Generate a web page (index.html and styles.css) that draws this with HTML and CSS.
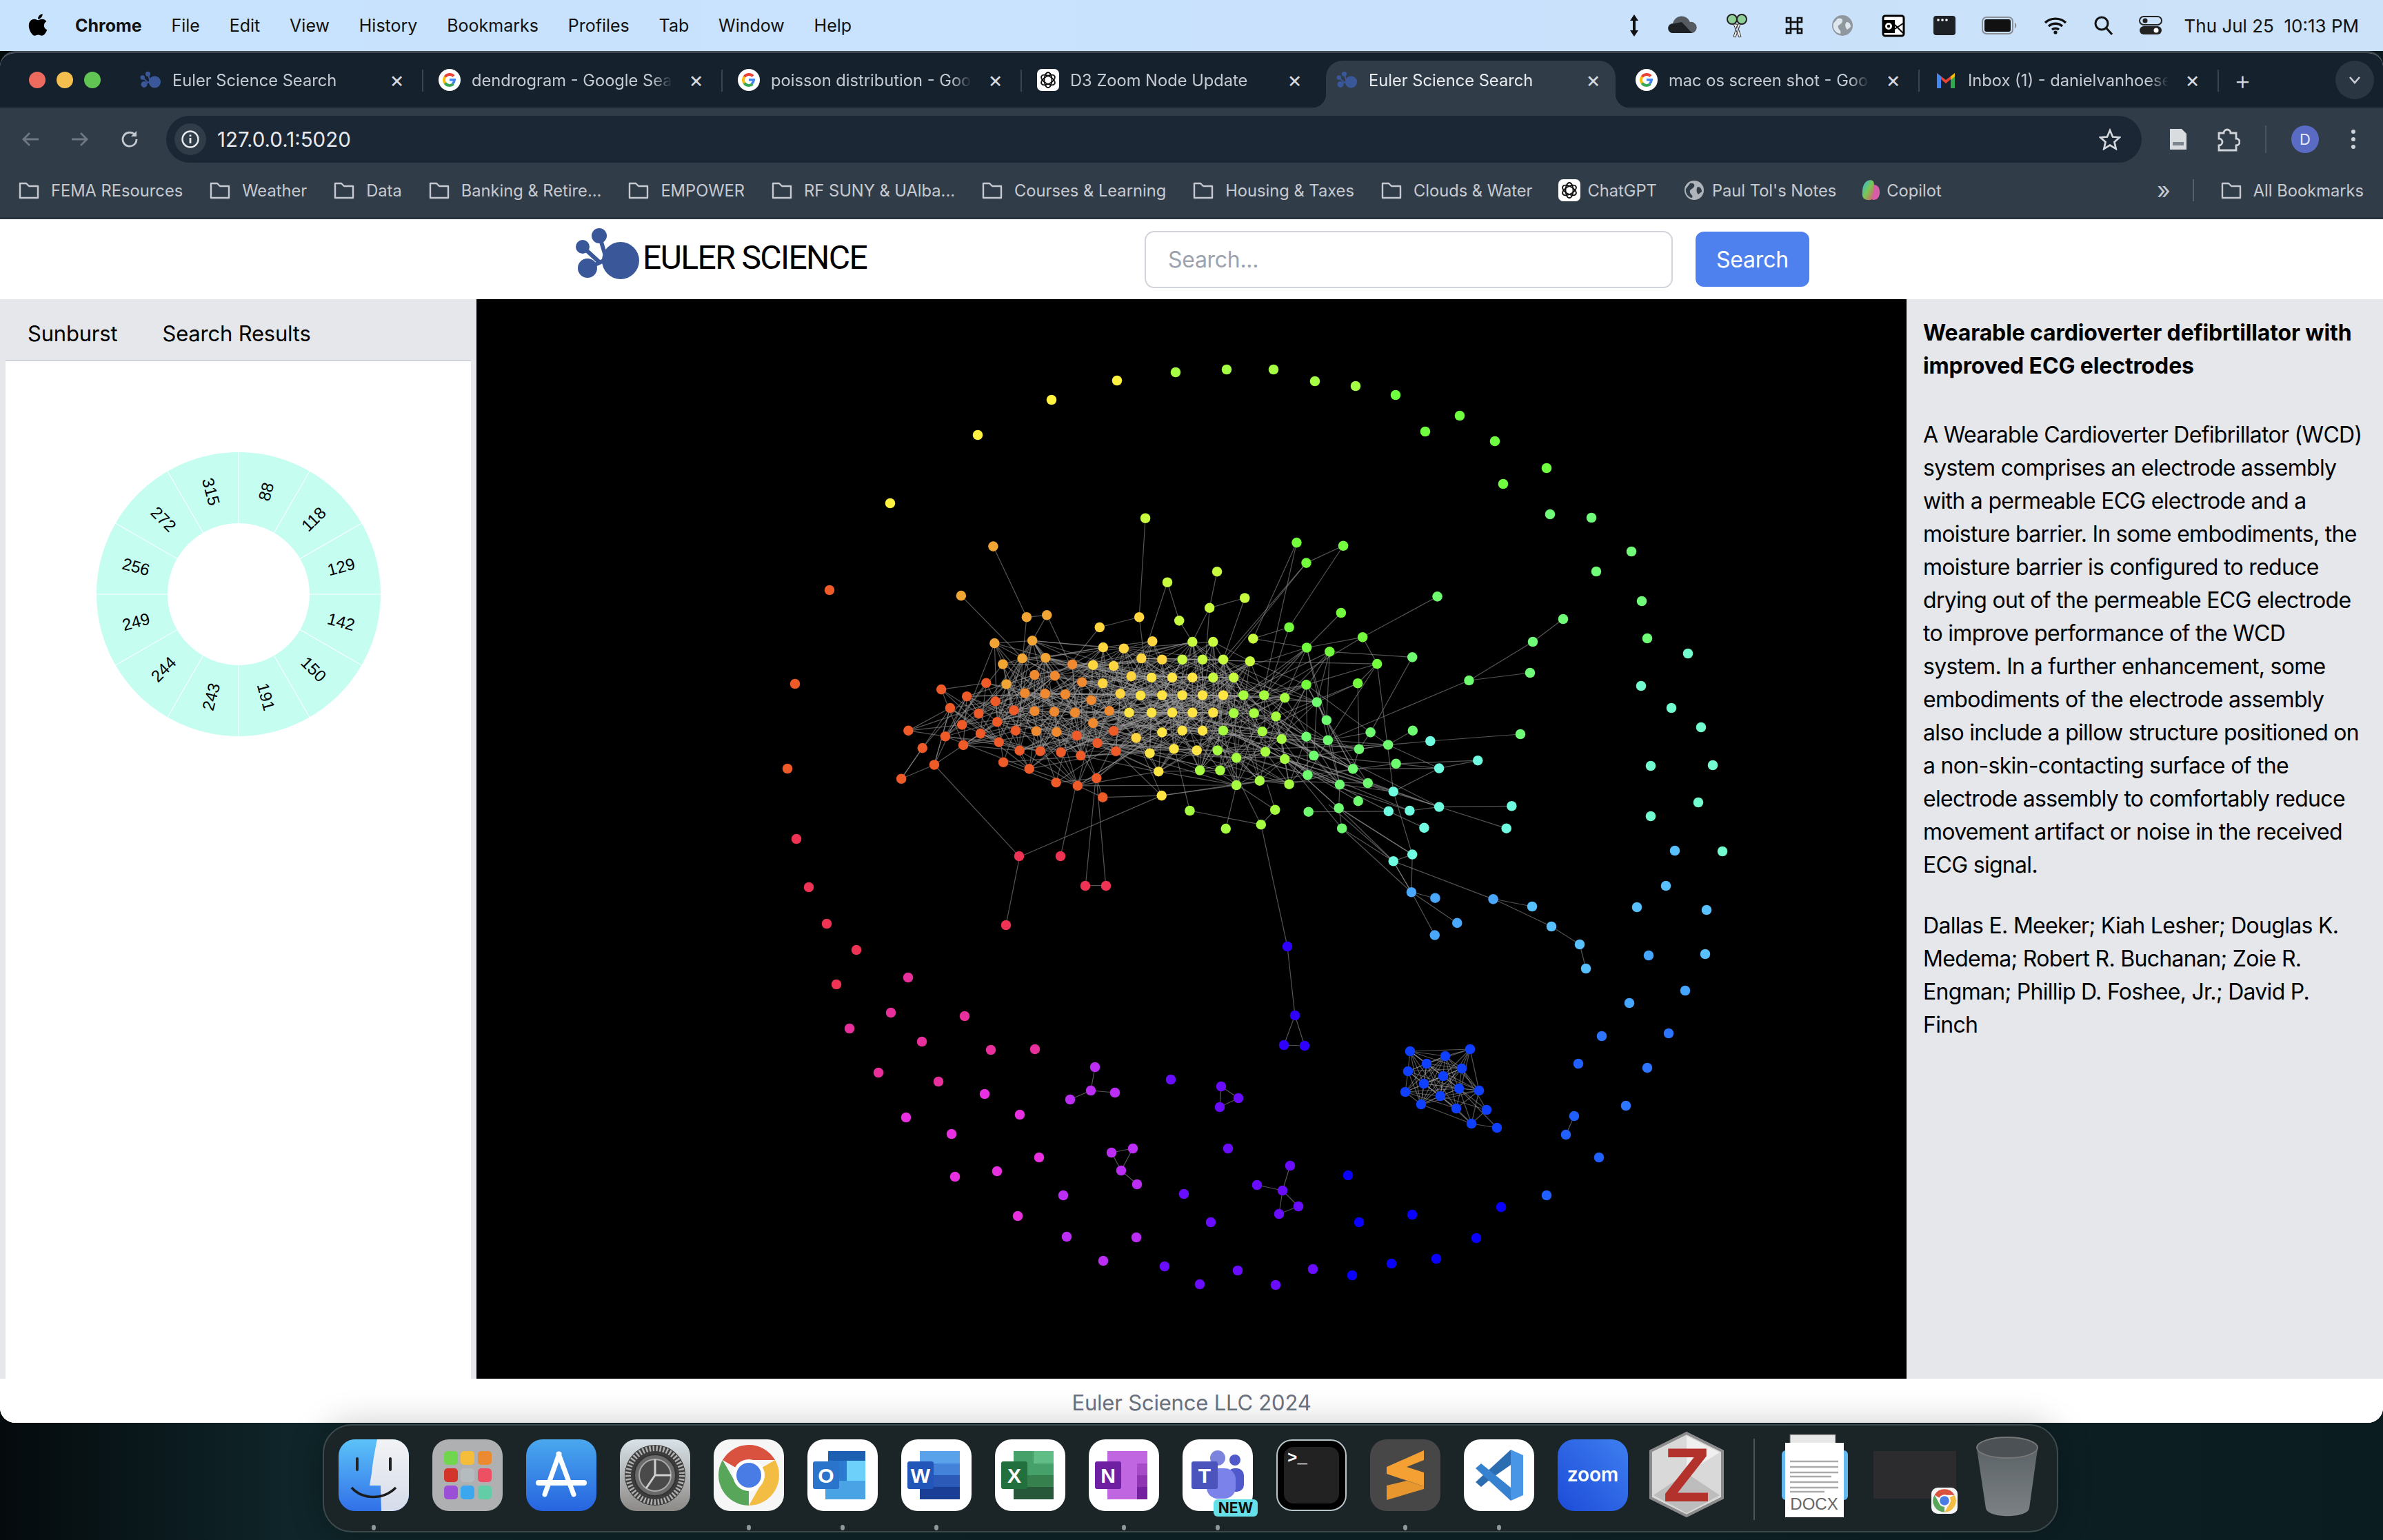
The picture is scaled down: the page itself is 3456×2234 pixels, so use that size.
FILE: index.html
```html
<!DOCTYPE html>
<html lang="en">
<head>
<meta charset="utf-8">
<title>Euler Science Search</title>
<link rel="stylesheet" href="styles.css">
</head>
<body>
<svg class="defs" aria-hidden="true">
  <defs>
    <clipPath id="sq"><rect width="102" height="104" rx="24"/></clipPath>
    <linearGradient id="gFinder" x1="0" y1="0" x2="0" y2="1"><stop offset="0" stop-color="#5cc3f9"/><stop offset="1" stop-color="#3170e8"/></linearGradient>
    <linearGradient id="gFinderR" x1="0" y1="0" x2="0" y2="1"><stop offset="0" stop-color="#f2f3f5"/><stop offset="1" stop-color="#d5dcea"/></linearGradient>
    <linearGradient id="gStore" x1="0" y1="0" x2="0" y2="1"><stop offset="0" stop-color="#4aa8ee"/><stop offset="1" stop-color="#2664df"/></linearGradient>
    <linearGradient id="gSet" x1="0" y1="0" x2="0" y2="1"><stop offset="0" stop-color="#d8e2e8"/><stop offset="1" stop-color="#8d8a87"/></linearGradient>
    <linearGradient id="gZoom" x1="1" y1="0" x2="0" y2="1"><stop offset="0" stop-color="#3e7ff0"/><stop offset="1" stop-color="#1d4bd8"/></linearGradient>
    <linearGradient id="gTrash" x1="0" y1="0" x2="0" y2="1"><stop offset="0" stop-color="#585f62"/><stop offset="1" stop-color="#7b8184"/></linearGradient>
    <linearGradient id="gCopilot" x1="0" y1="0" x2="1" y2="1"><stop offset="0" stop-color="#2fb6e8"/><stop offset=".5" stop-color="#7ac74f"/><stop offset="1" stop-color="#e8507a"/></linearGradient>
    <symbol id="i-euler" viewBox="0 0 100 76">
      <path class="euler-link" d="M39 10 L48 40 M15 27 L40 50 M22 58 L50 45"/>
      <circle class="euler-dot" cx="39" cy="11" r="11"/><circle class="euler-dot" cx="15" cy="27" r="10"/>
      <circle class="euler-dot" cx="22" cy="58" r="14"/><circle class="euler-dot" cx="70" cy="47" r="27"/>
    </symbol>
    <symbol id="i-g" viewBox="0 0 32 32">
      <circle cx="16" cy="16" r="16" fill="#fff"/>
      <path d="M9.5 11.5A8 8 0 0 1 22 10.5" fill="none" stroke="#ea4335" stroke-width="4"/>
      <path d="M9.5 11.5A8 8 0 0 0 9.5 20.5" fill="none" stroke="#fbbc05" stroke-width="4"/>
      <path d="M9.5 20.5A8 8 0 0 0 21.5 21.8" fill="none" stroke="#34a853" stroke-width="4"/>
      <path d="M16 14h9v2a9 9 0 0 1-3.500 6.500l-2.500-2.500a5 5 0 0 0 2-2.500H16z" fill="#4285f4"/>
    </symbol>
    <symbol id="i-gpt" viewBox="0 0 32 32">
      <rect width="32" height="32" rx="7" fill="#fff"/>
      <g fill="none" stroke="#111" stroke-width="1.800">
        <ellipse cx="16" cy="16" rx="5.500" ry="11"/><ellipse cx="16" cy="16" rx="5.500" ry="11" transform="rotate(60 16 16)"/><ellipse cx="16" cy="16" rx="5.500" ry="11" transform="rotate(120 16 16)"/>
      </g>
    </symbol>
    <symbol id="i-folder" viewBox="0 0 32 32">
      <path d="M3 6h9l4 4h13v17H3z" fill="none" stroke="currentColor" stroke-width="2.400" stroke-linejoin="round"/>
    </symbol>
    <symbol id="i-chrome" viewBox="0 0 100 100">
      <path d="M50 6a44 44 0 0 1 38.100 22H50a22 22 0 0 0-19 11L12 28A44 44 0 0 1 50 6z" fill="#d8523f"/>
      <path d="M50 6a44 44 0 0 1 38.100 22H50a22 22 0 0 0-19 11L12 28A44 44 0 0 1 50 6z" fill="#f2bd42" transform="rotate(120 50 50)"/>
      <path d="M50 6a44 44 0 0 1 38.100 22H50a22 22 0 0 0-19 11L12 28A44 44 0 0 1 50 6z" fill="#57a65a" transform="rotate(240 50 50)"/>
      <circle cx="50" cy="50" r="23" fill="#fff"/><circle cx="50" cy="50" r="18" fill="#4a7ce6"/>
    </symbol>
  </defs>
</svg>

<header class="menubar">
  <svg class="apple" viewBox="0 0 384 512"><path d="M318.700 268.700c-.2-36.700 16.400-64.400 50-84.800-18.800-26.900-47.200-41.700-84.700-44.600-35.500-2.800-74.300 20.700-88.500 20.700-15 0-49.400-19.700-76.400-19.700C63.300 141.200 4 184.800 4 273.500q0 39.300 14.400 81.200c12.800 36.700 59 126.700 107.200 125.200 25.200-.6 43-17.900 75.800-17.900 31.800 0 48.300 17.900 76.400 17.900 48.600-.7 90.400-82.500 102.600-119.300-65.200-30.700-61.700-90-61.700-91.900zm-56.600-164.200c27.300-32.400 24.800-61.900 24-72.500-24.100 1.400-52 16.400-67.900 34.900-17.500 19.800-27.800 44.300-25.600 71.900 26.100 2 49.900-11.400 69.500-34.300z"/></svg>
  <nav class="menus">
    <b>Chrome</b><span>File</span><span>Edit</span><span>View</span><span>History</span><span>Bookmarks</span><span>Profiles</span><span>Tab</span><span>Window</span><span>Help</span>
  </nav>
  <div class="status">
    <svg class="st" width="16" height="32" viewBox="0 0 16 32"><path d="M8 0l6 9h-4v14h4l-6 9-6-9h4V9H2z" fill="#111"/></svg>
    <svg class="st" width="42" height="32" viewBox="0 0 42 32"><path d="M7 27a7 7 0 0 1 0-14 13 13 0 0 1 25-2 8 8 0 0 1 3 16z" fill="#555b60"/><path d="M7 27a7 7 0 0 1-3-13l16-3 15 16z" fill="#1d2126"/></svg>
    <svg class="st" width="34" height="36" viewBox="0 0 34 36"><circle cx="10" cy="9" r="7" fill="#8fcf98" stroke="#222" stroke-width="2"/><circle cx="24" cy="9" r="7" fill="#8fcf98" stroke="#222" stroke-width="2"/><path d="M12 16l8 19 3-1-6-18zM22 16l-7 19-3-1 6-18z" fill="#eee" stroke="#333"/></svg>
    <svg class="st st-cmd" width="26" height="30" viewBox="0 0 26 30"><path d="M8 4v22M18 4v22M2 10h22M2 20h22M2 4h6v6H2zM18 4h6v6h-6zM2 20h6v6H2zM18 20h6v6h-6z" fill="none" stroke="#111" stroke-width="2.600"/></svg>
    <svg class="st" width="32" height="32" viewBox="0 0 32 32"><circle cx="16" cy="16" r="15" fill="#8f979f"/><path d="M9 6c6-2 9 2 6 6s-6 3-5 7 5 4 3 9c-7-1-12-8-10-15zM22 11c4 0 6 3 6 7l-5 4c-3-3-4-8-1-11z" fill="#dfe7ee"/></svg>
    <svg class="st" width="34" height="34" viewBox="0 0 34 34"><rect x="2" y="3" width="30" height="29" rx="3" fill="#fff" stroke="#000" stroke-width="3"/><rect x="1" y="9" width="18" height="19" fill="#000"/><circle cx="10" cy="18" r="5" fill="#fff"/><circle cx="10" cy="18" r="2.200" fill="#000"/><path d="M19 16l12 12M31 14l-12 8" stroke="#000" stroke-width="2"/></svg>
    <svg class="st" width="32" height="28" viewBox="0 0 32 28"><rect width="32" height="28" rx="4" fill="#1d2126"/><circle cx="7" cy="6" r="1.800" fill="#fff"/><circle cx="13" cy="6" r="1.800" fill="#fff"/><circle cx="19" cy="6" r="1.800" fill="#fff"/></svg>
    <svg class="st st-tight" width="52" height="26" viewBox="0 0 52 26"><rect x="1" y="1" width="44" height="24" rx="6" fill="none" stroke="#8a8f95" stroke-width="2"/><rect x="4" y="4" width="38" height="18" rx="3" fill="#111"/><path d="M48 9c3 1 3 7 0 8z" fill="#8a8f95"/></svg>
    <svg class="st st-tight" width="34" height="26" viewBox="0 0 34 26"><path d="M2 9a22 22 0 0 1 30 0M7 14a15 15 0 0 1 20 0M12 19a8 8 0 0 1 10 0" fill="none" stroke="#111" stroke-width="3.400"/><circle cx="17" cy="23" r="2.600" fill="#111"/></svg>
    <svg class="st st-tight" width="28" height="30" viewBox="0 0 28 30"><circle cx="12" cy="12" r="9" fill="none" stroke="#111" stroke-width="3"/><path d="M19 19l8 9" stroke="#111" stroke-width="3"/></svg>
    <svg class="st st-tight" width="34" height="28" viewBox="0 0 34 28"><rect x="1" y="1" width="32" height="12" rx="6" fill="none" stroke="#222" stroke-width="2"/><circle cx="9" cy="7" r="3.500" fill="#222"/><rect x="1" y="15" width="32" height="12" rx="6" fill="#222"/><circle cx="25" cy="21" r="3.500" fill="#fff"/></svg>
    <time class="clock">Thu Jul 25&nbsp; 10:13 PM</time>
  </div>
</header>

<div class="window">
  <div class="tabstrip">
    <div class="lights"><i class="l-red"></i><i class="l-yel"></i><i class="l-grn"></i></div>
    <div class="tab"><svg class="fav"><use href="#i-euler"/></svg><span class="t-title">Euler Science Search</span><span class="t-x">×</span></div>
    <div class="tab"><svg class="fav"><use href="#i-g"/></svg><span class="t-title">dendrogram - Google Search</span><span class="t-x">×</span></div>
    <div class="tab"><svg class="fav"><use href="#i-g"/></svg><span class="t-title">poisson distribution - Google Search</span><span class="t-x">×</span></div>
    <div class="tab nosep"><svg class="fav"><use href="#i-gpt"/></svg><span class="t-title">D3 Zoom Node Update</span><span class="t-x">×</span></div>
    <div class="tab active"><svg class="fav"><use href="#i-euler"/></svg><span class="t-title">Euler Science Search</span><span class="t-x">×</span></div>
    <div class="tab"><svg class="fav"><use href="#i-g"/></svg><span class="t-title">mac os screen shot - Google Search</span><span class="t-x">×</span></div>
    <div class="tab"><svg class="fav" viewBox="0 0 32 32"><path d="M3 28V6l13 10L29 6v22h-6V15l-7 6-7-6v13z" fill="#ea4335"/><path d="M3 28V6l6 5v17z" fill="#4285f4"/><path d="M29 28V6l-6 5v17z" fill="#34a853"/><path d="M23 11l6-5v5l-6 5z" fill="#fbbc05"/></svg><span class="t-title">Inbox (1) - danielvanhoese@gmail.com</span><span class="t-x">×</span></div>
    <div class="newtab">+</div>
    <div class="tabmenu"><svg width="18" height="12" viewBox="0 0 18 12"><path d="M2 2l7 8 7-8" fill="none" stroke="#c9ced4" stroke-width="2.600"/></svg></div>
  </div>

  <div class="toolbar">
    <svg class="tb-btn" viewBox="0 0 30 30"><path d="M27 15H5M14 6l-9 9 9 9" fill="none" stroke="#6e7783" stroke-width="2.800"/></svg>
    <svg class="tb-btn" viewBox="0 0 30 30"><path d="M3 15h22M16 6l9 9-9 9" fill="none" stroke="#6e7783" stroke-width="2.800"/></svg>
    <svg class="tb-btn" viewBox="0 0 30 30"><path d="M25 15a10 10 0 1 1-3-7" fill="none" stroke="#c4c9cf" stroke-width="2.800"/><path d="M25 3v8h-8z" fill="#c4c9cf"/></svg>
    <div class="omnibox">
      <span class="o-chip"><svg width="28" height="28" viewBox="0 0 28 28"><circle cx="14" cy="14" r="11.500" fill="none" stroke="#e6e9ee" stroke-width="2.400"/><path d="M14 12v8M14 7.500v2.500" stroke="#e6e9ee" stroke-width="2.800"/></svg></span>
      <span class="o-url">127.0.0.1:5020</span>
      <svg class="o-star" width="32" height="32" viewBox="0 0 32 32"><path d="M16 3l4 9.500 10 .8-7.600 6.600 2.300 10L16 24.600 7.300 29.900l2.300-10L2 13.300l10-.8z" fill="none" stroke="#d6dade" stroke-width="2.600"/></svg>
    </div>
    <div class="tb-right">
      <svg width="36" height="32" viewBox="0 0 36 32"><path d="M6 1h17l7 7v23H6z" fill="#d9dcdf"/><rect x="10" y="20" width="16" height="5" fill="#7d858e"/></svg>
      <svg width="36" height="36" viewBox="0 0 36 36"><path d="M5 9h7a5 5 0 0 1 10 0h8v8a5 5 0 0 1 0 10v7H5v-7a5 5 0 0 0 0-10z" fill="none" stroke="#d0d4d9" stroke-width="2.800"/></svg>
      <i class="tb-sep"></i>
      <span class="avatar">D</span>
      <svg width="28" height="30" viewBox="0 0 28 30"><circle cx="14" cy="4" r="3" fill="#d0d4d9"/><circle cx="14" cy="15" r="3" fill="#d0d4d9"/><circle cx="14" cy="26" r="3" fill="#d0d4d9"/></svg>
    </div>
  </div>

  <div class="bookmarks">
    <a class="bm"><svg class="bm-ic"><use href="#i-folder"/></svg>FEMA REsources</a>
    <a class="bm"><svg class="bm-ic"><use href="#i-folder"/></svg>Weather</a>
    <a class="bm"><svg class="bm-ic"><use href="#i-folder"/></svg>Data</a>
    <a class="bm"><svg class="bm-ic"><use href="#i-folder"/></svg>Banking &amp; Retire...</a>
    <a class="bm"><svg class="bm-ic"><use href="#i-folder"/></svg>EMPOWER</a>
    <a class="bm"><svg class="bm-ic"><use href="#i-folder"/></svg>RF SUNY &amp; UAlba...</a>
    <a class="bm"><svg class="bm-ic"><use href="#i-folder"/></svg>Courses &amp; Learning</a>
    <a class="bm"><svg class="bm-ic"><use href="#i-folder"/></svg>Housing &amp; Taxes</a>
    <a class="bm"><svg class="bm-ic"><use href="#i-folder"/></svg>Clouds &amp; Water</a>
    <a class="bm bm-tight"><svg class="bm-ic"><use href="#i-gpt"/></svg>ChatGPT</a>
    <a class="bm bm-tight"><svg class="bm-ic" viewBox="0 0 32 32"><circle cx="16" cy="16" r="14" fill="#aeb4ba"/><path d="M10 6c6-1 8 3 5 6s-6 3-5 7 5 4 3 8c-6-1-10-7-9-13zM21 11c4 0 6 3 6 7l-5 4c-3-3-3-8-1-11z" fill="#313c49"/></svg>Paul Tol's Notes</a>
    <a class="bm bm-tighter"><svg class="bm-ic" viewBox="0 0 32 32"><path d="M11 2c6-2 9 1 9 6v14c0 6-4 9-9 8-6 0-9-4-8-11 0-9 3-15 8-17z" fill="url(#gCopilot)"/><path d="M20 8c5 0 9 5 8 13-1 6-4 9-9 9-3 0-2-3-1-6z" fill="#d85ea8"/></svg>Copilot</a>
    <span class="bm-more">»</span>
    <i class="bm-sep"></i>
    <a class="bm"><svg class="bm-ic"><use href="#i-folder"/></svg>All Bookmarks</a>
  </div>

  <div class="page">
    <div class="site-head">
      <div class="brand"><svg class="brand-ic"><use href="#i-euler"/></svg><span class="brand-name">EULER SCIENCE</span></div>
      <input class="search" type="text" placeholder="Search...">
      <button class="search-btn" type="button">Search</button>
    </div>
    <main class="app">
      <section class="left">
        <div class="left-tabs"><span>Sunburst</span><span>Search Results</span></div>
        <div class="left-body">
          <svg class="sunburst" viewBox="-338 -338 676 676">
            <circle class="sb-ring" r="154.500"/>
            <g class="sb-lines">
              <line x1="0" y1="-103" x2="0" y2="-207"/><line x1="0" y1="-103" x2="0" y2="-207" transform="rotate(30)"/><line x1="0" y1="-103" x2="0" y2="-207" transform="rotate(60)"/><line x1="0" y1="-103" x2="0" y2="-207" transform="rotate(90)"/><line x1="0" y1="-103" x2="0" y2="-207" transform="rotate(120)"/><line x1="0" y1="-103" x2="0" y2="-207" transform="rotate(150)"/><line x1="0" y1="-103" x2="0" y2="-207" transform="rotate(180)"/><line x1="0" y1="-103" x2="0" y2="-207" transform="rotate(210)"/><line x1="0" y1="-103" x2="0" y2="-207" transform="rotate(240)"/><line x1="0" y1="-103" x2="0" y2="-207" transform="rotate(270)"/><line x1="0" y1="-103" x2="0" y2="-207" transform="rotate(300)"/><line x1="0" y1="-103" x2="0" y2="-207" transform="rotate(330)"/>
            </g>
            <g class="sb-labels">
              <text transform="rotate(-75) translate(154 0)" dy=".35em">88</text>
              <text transform="rotate(-45) translate(154 0)" dy=".35em">118</text>
              <text transform="rotate(-15) translate(154 0)" dy=".35em">129</text>
              <text transform="rotate(15) translate(154 0)" dy=".35em">142</text>
              <text transform="rotate(45) translate(154 0)" dy=".35em">150</text>
              <text transform="rotate(75) translate(154 0)" dy=".35em">191</text>
              <text transform="rotate(105) translate(154 0) rotate(180)" dy=".35em">243</text>
              <text transform="rotate(135) translate(154 0) rotate(180)" dy=".35em">244</text>
              <text transform="rotate(165) translate(154 0) rotate(180)" dy=".35em">249</text>
              <text transform="rotate(195) translate(154 0) rotate(180)" dy=".35em">256</text>
              <text transform="rotate(225) translate(154 0) rotate(180)" dy=".35em">272</text>
              <text transform="rotate(255) translate(154 0) rotate(180)" dy=".35em">315</text>
            </g>
          </svg>
        </div>
      </section>
      <section class="graph"><svg id="graph" viewBox="691 434 2074 1566"></svg></section>
      <aside class="detail">
        <h2>Wearable cardioverter defibrtillator with<br>improved ECG electrodes</h2>
        <p class="abstract">A Wearable Cardioverter Defibrillator (WCD)<br>system comprises an electrode assembly<br>with a permeable ECG electrode and a<br>moisture barrier. In some embodiments, the<br>moisture barrier is configured to reduce<br>drying out of the permeable ECG electrode<br>to improve performance of the WCD<br>system. In a further enhancement, some<br>embodiments of the electrode assembly<br>also include a pillow structure positioned on<br>a non-skin-contacting surface of the<br>electrode assembly to comfortably reduce<br>movement artifact or noise in the received<br>ECG signal.</p>
        <p>Dallas E. Meeker; Kiah Lesher; Douglas K.<br>Medema; Robert R. Buchanan; Zoie R.<br>Engman; Phillip D. Foshee, Jr.; David P.<br>Finch</p>
      </aside>
    </main>
    <footer class="site-foot">Euler Science LLC 2024</footer>
  </div>
</div>

<div class="dock">
  <div class="dk on"><svg class="ico" viewBox="0 0 102 104"><g clip-path="url(#sq)"><rect width="102" height="104" fill="url(#gFinder)"/><path d="M56 0h46v104H62l-1-37H45l3-18C50 30 53 15 56 0z" fill="url(#gFinderR)"/><path d="M27 28v16M75 28v16" stroke="#222" stroke-width="4" stroke-linecap="round"/><path d="M19 70c16 18 46 18 64 0" fill="none" stroke="#1c1c1c" stroke-width="3.500"/></g></svg></div>
  <div class="dk"><svg class="ico" viewBox="0 0 102 104"><rect width="102" height="104" rx="24" fill="#aeb0b2"/><rect x="17" y="17" width="20" height="20" rx="5" fill="#6fd64e"/><rect x="41" y="17" width="20" height="20" rx="5" fill="#f5bd3a"/><rect x="66" y="17" width="20" height="20" rx="5" fill="#ec8a2f"/><rect x="17" y="42" width="20" height="20" rx="5" fill="#d4352a"/><rect x="41" y="42" width="20" height="20" rx="5" fill="#b5bcc0"/><rect x="66" y="42" width="20" height="20" rx="5" fill="#ef4f63"/><rect x="17" y="67" width="20" height="20" rx="5" fill="#9b4fd6"/><rect x="41" y="67" width="20" height="20" rx="5" fill="#3aa7ef"/><rect x="66" y="67" width="20" height="20" rx="5" fill="#63cda8"/></svg></div>
  <div class="dk"><svg class="ico" viewBox="0 0 102 104"><rect width="102" height="104" rx="24" fill="url(#gStore)"/><path d="M48 21L27 80M47 21L69 80" stroke="#fff" stroke-width="7" stroke-linecap="round"/><path d="M18 63h66" stroke="#fff" stroke-width="8" stroke-linecap="round"/></svg></div>
  <div class="dk"><svg class="ico" viewBox="0 0 102 104"><rect width="102" height="104" rx="24" fill="url(#gSet)"/><circle cx="51" cy="52" r="44" fill="#3c3c3c"/><circle cx="51" cy="52" r="39" fill="none" stroke="#b0b0b0" stroke-width="8" stroke-dasharray="2.500 2.500"/><circle cx="51" cy="52" r="30" fill="#6a6a6a" stroke="#333" stroke-width="2"/><circle cx="51" cy="52" r="23" fill="#4a4a4a" stroke="#aaa" stroke-width="2"/><path d="M51 52V29M51 52h23M51 52L38 71" stroke="#cfcfcf" stroke-width="3"/></svg></div>
  <div class="dk on"><svg class="ico" viewBox="0 0 102 104"><rect width="102" height="104" rx="24" fill="#f6f6f6"/><use href="#i-chrome" x="0" y="2" width="102" height="100"/></svg></div>
  <div class="dk on"><svg class="ico" viewBox="0 0 102 104"><rect width="102" height="104" rx="24" fill="#fff"/><rect x="30" y="17" width="54" height="14" fill="#1d5fb0"/><rect x="30" y="31" width="27" height="30" fill="#2a7ad0"/><rect x="57" y="31" width="27" height="30" fill="#6cd0fa"/><path d="M26 60h58v27H26z" fill="#4aa3e4"/><rect x="8" y="32" width="38" height="40" rx="3" fill="#2a74cc"/><text class="ms-l" x="27" y="63">O</text></svg></div>
  <div class="dk on"><svg class="ico" viewBox="0 0 102 104"><rect width="102" height="104" rx="24" fill="#fff"/><rect x="27" y="17" width="58" height="18" fill="#5aa2ea"/><rect x="27" y="35" width="58" height="17" fill="#4481d8"/><rect x="27" y="52" width="58" height="17" fill="#2b5ab8"/><rect x="27" y="69" width="58" height="18" fill="#1a3e96"/><rect x="9" y="32" width="38" height="40" rx="3" fill="#2256b8"/><text class="ms-l" x="28" y="63">W</text></svg></div>
  <div class="dk"><svg class="ico" viewBox="0 0 102 104"><rect width="102" height="104" rx="24" fill="#fff"/><rect x="27" y="17" width="29" height="35" fill="#46a06a"/><rect x="56" y="17" width="29" height="18" fill="#5fbd85"/><rect x="56" y="35" width="29" height="17" fill="#46a06a"/><rect x="27" y="52" width="58" height="17" fill="#36804e"/><rect x="27" y="69" width="58" height="18" fill="#28583a"/><rect x="9" y="32" width="38" height="40" rx="3" fill="#21703e"/><text class="ms-l" x="28" y="63">X</text></svg></div>
  <div class="dk on"><svg class="ico" viewBox="0 0 102 104"><rect width="102" height="104" rx="24" fill="#fff"/><rect x="27" y="17" width="58" height="70" fill="#bf66e0"/><rect x="70" y="35" width="15" height="17" fill="#a74bc8"/><rect x="70" y="52" width="15" height="17" fill="#8f35b4"/><rect x="70" y="69" width="15" height="18" fill="#731fa0"/><rect x="9" y="32" width="38" height="40" rx="3" fill="#6f1fa2"/><text class="ms-l" x="28" y="63">N</text></svg></div>
  <div class="dk on"><svg class="ico" viewBox="0 0 102 104"><rect width="102" height="104" rx="24" fill="#fff"/><circle cx="51" cy="27" r="11" fill="#7b83dd"/><circle cx="76" cy="30" r="8" fill="#5059c9"/><rect x="65" y="42" width="24" height="34" rx="10" fill="#5059c9"/><rect x="35" y="42" width="42" height="44" rx="16" fill="#7b83eb"/><rect x="13" y="32" width="38" height="40" rx="3" fill="#4b53bc"/><text class="ms-l" x="32" y="63">T</text></svg><span class="badge-new">NEW</span></div>
  <div class="dk"><svg class="ico" viewBox="0 0 102 104"><rect x="1" y="1" width="100" height="102" rx="22" fill="#000" stroke="#b9c5c9" stroke-width="2"/><rect x="11" y="11" width="80" height="82" rx="14" fill="#222"/><text class="term-l" x="16" y="34">&gt;_</text></svg></div>
  <div class="dk on"><svg class="ico" viewBox="0 0 102 104"><rect width="102" height="104" rx="24" fill="#474747"/><path d="M78 16V30L53 40L78 48V68L24 50V40z" fill="#f4a033"/><path d="M24 67L53 60L78 68V72L24 88z" fill="#e8962e"/></svg></div>
  <div class="dk on"><svg class="ico" viewBox="0 0 102 104"><rect width="102" height="104" rx="24" fill="#fff"/><path d="M68 15l18 8v58l-18 8z" fill="#4a96e6"/><path d="M68 15v22L38 58l-13 11-8-7z" fill="#2c6cb0"/><path d="M17 42l8-7 43 35v19z" fill="#3782d0"/></svg></div>
  <div class="dk"><svg class="ico" viewBox="0 0 102 104"><rect width="102" height="104" rx="24" fill="url(#gZoom)"/><text class="zoom-l" x="51" y="61">zoom</text></svg></div>
  <div class="dk"><svg class="ico ico-zot" viewBox="0 0 108 124"><path d="M54 2L106 28v68L54 122 2 96V28z" fill="#d9d9d9" stroke="#8c8c8c" stroke-width="4"/><path d="M54 6l48 24L54 60z" fill="#efefef"/><path d="M6 92l48-32 48 32-48 26z" fill="#bdbdbd"/><text class="zot-l" x="54" y="101">Z</text></svg></div>
  <i class="dock-sep"></i>
  <div class="dk dk-doc"><svg class="ico ico-doc" viewBox="0 0 96 124"><rect x="0" y="24" width="96" height="72" rx="6" fill="#66b9ef"/><rect x="12" y="1" width="66" height="40" fill="#e8e8e8" stroke="#666"/><rect x="5" y="13" width="85" height="108" fill="#fff"/><path d="M12 40h70M12 48h70M12 56h70M12 62h60M12 70h70M12 78h70M12 84h50" stroke="#aaa" stroke-width="2.500"/><text class="docx-l" x="47" y="110">DOCX</text></svg></div>
  <div class="dk dk-chrome"><span class="mini-win"></span><svg class="mini-chrome" viewBox="0 0 100 100"><rect width="100" height="100" rx="24" fill="#f6f6f6"/><use href="#i-chrome" width="100" height="100"/></svg></div>
  <div class="dk dk-trash"><svg class="ico ico-trash" viewBox="0 0 92 116"><path d="M2 18c0-20 88-20 88 0L78 104c-3 15-60 15-63 0z" fill="url(#gTrash)"/><ellipse cx="46" cy="16" rx="44" ry="15" fill="#4b5154" stroke="#777" stroke-width="2"/></svg></div>
</div>
<script src="graph.js"></script>
</body>
</html>
```

FILE: styles.css
```css
*{box-sizing:border-box}
html,body{margin:0;padding:0}
body{width:3456px;height:2234px;overflow:hidden;display:flex;flex-direction:column;font-family:"Inter","Noto Sans",sans-serif;background:linear-gradient(90deg,#050a0d,#0f2529 12%,#0e2226 70%,#0b1c20);color:#000}
.defs{position:absolute;width:0;height:0}
.euler-link{fill:none;stroke:#3a5899;stroke-width:6}
.euler-dot{fill:#3a5899}

.menubar{height:74px;flex:none;background:linear-gradient(90deg,#c8e3fe,#c9e1fc 60%,#cbe2f8);display:flex;align-items:center;font-size:25px;color:#111}
.apple{width:28px;height:36px;margin:0 0 2px 41px;fill:#000}
.menus{display:flex;gap:42.800px;margin-left:40px;align-items:center}
.menus b{font-weight:700}
.status{margin-left:auto;display:flex;align-items:center;gap:41px;padding-right:35px}
.clock{font-size:26px;margin-left:-9px;white-space:nowrap}
.st{display:block}
.st-cmd{margin-left:12px}
.st-tight{margin-left:-3px}

.window{height:1990px;flex:none;display:flex;flex-direction:column;border-radius:22px;overflow:hidden;background:#fff;border-top:3px solid #3f4850;position:relative}
.tabstrip{height:79px;flex:none;background:#16212e;display:flex;align-items:flex-start;padding-top:11px;color:#c4cad1;font-size:23.700px}
.lights{width:180px;height:56px;flex:none;display:flex;align-items:center;gap:16px;padding-left:42px}
.lights i{width:24px;height:24px;border-radius:50%;display:block}
.l-red{background:#ed6a5e}.l-yel{background:#f4bf4f}.l-grn{background:#61c554}
.tab{width:434px;height:68px;flex:none;position:relative;display:flex;align-items:center;padding:0 0 12px 22px;gap:16px}
.tab::after{content:"";position:absolute;right:0;top:13px;width:2px;height:32px;background:#3a4552}
.tab.nosep::after{display:none}
.tab.active{width:420px;margin:0 7px;background:#313c49;border-radius:24px 24px 0 0;padding-left:14px;color:#e8ebee}
.tab.active::before,.tab.active::after{content:"";position:absolute;display:block;top:auto;bottom:0;width:20px;height:20px;background:radial-gradient(circle at 0 0,transparent 20px,#313c49 20.500px)}
.tab.active::before{left:-20px}
.tab.active::after{right:-20px;transform:scaleX(-1)}
.fav{width:32px;height:32px;flex:none}
.t-title{width:291px;flex:none;white-space:nowrap;overflow:hidden;-webkit-mask-image:linear-gradient(90deg,#000 90%,transparent);mask-image:linear-gradient(90deg,#000 90%,transparent)}
.t-x{font-size:32px;line-height:1;color:#d5d9de;margin-left:8px}
.newtab{font-size:38px;font-weight:300;line-height:56px;margin-left:22px;color:#d5d9de}
.tabmenu{margin-left:auto;margin-right:13px;width:56px;height:56px;border-radius:50%;background:#2b3643;display:flex;align-items:center;justify-content:center}

.toolbar{height:81px;flex:none;background:#313c49;display:flex;align-items:center;padding:11px 0 0 29px;gap:42px}
.tb-btn{width:30px;height:30px;flex:none}
.omnibox{width:2865px;height:68px;flex:none;margin-left:-4px;background:#1b2734;border-radius:34px;display:flex;align-items:center;padding:0 30px 0 12px;color:#e6e9ee;font-size:29.500px}
.o-chip{width:46px;height:46px;border-radius:50%;background:#313c49;display:flex;align-items:center;justify-content:center}
.o-url{margin-left:16px}
.o-star{margin-left:auto}
.tb-right{display:flex;align-items:center;gap:36px;margin-left:-7px}
.tb-sep{width:2px;height:40px;background:#4a5562;display:block}
.avatar{width:40px;height:40px;border-radius:50%;background:#5a6bc4;color:#e8ebff;display:flex;align-items:center;justify-content:center;font-size:22px}

.bookmarks{height:81px;flex:none;background:#313c49;border-bottom:3px solid #2a3440;display:flex;align-items:center;padding-left:26px;gap:38px;color:#c6cad0;font-size:23.700px}
.bm{display:flex;align-items:center;gap:16px;white-space:nowrap}
.bm-tight{gap:10px}
.bm-tighter{gap:6px;margin-left:-3px}
.bm-ic{width:32px;height:32px;flex:none;color:#c6cad0}
.bm-more{margin-left:auto;font-size:34px;line-height:1;margin-right:-6px}
.bm-sep{width:2px;height:32px;background:#55606c;display:block}
.bm:last-child{padding-right:28px}

.page{flex:1;min-height:0;display:flex;flex-direction:column;background:#fff}
.site-head{height:116px;flex:none;display:flex;align-items:center;padding-left:830px}
.brand{display:flex;align-items:center;width:830px;margin-top:-14px}
.brand-ic{width:100px;height:76px;flex:none}
.brand-name{font-family:"Roboto","Noto Sans",sans-serif;font-size:48px;letter-spacing:-1.600px;margin-left:2px;margin-top:8px;color:#000}
.search{width:766px;height:83px;border:2px solid #d1d5db;border-radius:14px;padding:0 32px;font:32px "Inter",sans-serif;letter-spacing:-.3px;background:#fff;color:#111}
.search::placeholder{color:#9ca3af;opacity:1}
.search-btn{width:165px;height:80px;margin-left:33px;border:0;border-radius:12px;background:#4f81ee;color:#fff;font:32px "Inter",sans-serif;letter-spacing:-.2px}

.app{height:1566px;flex:none;display:grid;grid-template-columns:691px 2074px 691px}
.left{background:#e5e7eb;padding:0 8px;display:flex;flex-direction:column}
.left-tabs{height:90px;flex:none;display:flex;align-items:center;gap:65px;padding:10px 0 0 32px;font-size:31px;letter-spacing:-.2px;border-bottom:2px solid #d1d5db}
.left-body{flex:1;background:#fff;overflow:hidden}
.sunburst{display:block;width:676px;height:676px}
.sb-ring{fill:none;stroke:#c5fdf0;stroke-width:103px}
.sb-lines line{stroke:#fff;stroke-width:1px}
.sb-labels text{font:24px "Liberation Sans",sans-serif;text-anchor:middle;fill:#000}
.graph{background:#000;overflow:hidden}
.graph svg{display:block;width:2074px;height:1566px}
.edge{stroke:#9a9a9a;stroke-opacity:.55;stroke-width:1.200px}
.node{stroke:#000;stroke-opacity:.15;stroke-width:.5px}
.detail{background:#e5e7eb;padding:25px 0 0 24px;font-size:32px;line-height:48px;letter-spacing:-.7px;white-space:nowrap}
.detail h2{margin:0 0 52px;font-size:32px;line-height:48px;font-weight:700;letter-spacing:-.13px}
.detail p{margin:0}
.detail .abstract{margin-bottom:40px}
.site-foot{height:64px;flex:none;display:flex;align-items:center;justify-content:center;padding-top:4px;font-size:31px;letter-spacing:-.2px;color:#6b7280;background:#fff}

.dock{position:relative;width:2517px;height:157px;flex:none;margin:2px 0 0 468px;background:#1b2527;border:2px solid #3c4a4c;border-radius:42px;display:flex;align-items:flex-start;gap:34px;padding:20px 0 0 21px;box-shadow:0 0 50px rgba(0,0,0,.22)}
.dk{width:102px;height:130px;flex:none;position:relative;display:flex;justify-content:center}
.dk.on::after{content:"";position:absolute;left:48px;top:124px;width:6px;height:8px;border-radius:50%;background:#8d9a9c}
.ico{width:102px;height:104px;display:block;overflow:visible}
.ico-zot{width:108px;height:124px;margin-top:-11px;flex:none}
.ms-l{font:700 30px "Liberation Sans",sans-serif;fill:#fff;text-anchor:middle}
.term-l{font:700 24px "Liberation Mono",monospace;fill:#fff}
.zoom-l{font:600 28px "Inter",sans-serif;fill:#fff;text-anchor:middle}
.zot-l{font:700 112px "Liberation Sans",sans-serif;fill:#b3322c;text-anchor:middle}
.docx-l{font:24px "Liberation Sans",sans-serif;fill:#666;text-anchor:middle}
.badge-new{position:absolute;left:45px;top:87px;width:64px;height:25px;border-radius:6px;background:#65e0e8;color:#111;font-size:21px;font-weight:700;line-height:25px;text-align:center}
.dock-sep{width:2px;height:118px;flex:none;background:#4b5658;display:block;margin-top:-1px;margin-left:12px}
.dk-doc{margin-left:2px}
.ico-doc{width:96px;height:124px;margin-top:-8px;flex:none}
.dk-chrome{width:120px}
.dk-trash{margin-left:-11px}
.ico-trash{width:92px;height:116px;margin-top:-4px;flex:none}
.mini-win{display:block;width:120px;height:69px;margin-top:17px;background:#2c2c2e}
.mini-chrome{position:absolute;right:-2px;top:70px;width:38px;height:38px}
```

FILE: graph.js
```js
// Positions of the force layout, as drawn. Coordinates share the viewBox of #graph.
var svg = document.getElementById('graph');
var NS = 'http://www.w3.org/2000/svg';
function Z(x, y) { return [1200 + x / 1.568, 700 + y / 2.376]; }

// central component, grouped by colour
var core = {
  '#ee5a28': [361,691,259,713,317,737,382,754,279,777,344,796,424,785,184,855,306,835,386,825,348,865,428,855,567,872,651,856,268,875,216,915,309,905,390,895,437,924,484,926,531,930,614,898,656,926,576,941,243,973,400,964,459,987,168,1021,520,1034,612,1019,569,1045,626,1085],
  '#ef8a30': [557,627,471,663,517,666,579,688,449,726,495,728,541,730,600,750,471,788,516,790,563,793,641,787,604,829,475,857,521,860],
  '#f0a535': [377,220,304,390,453,464,499,457,466,545,380,554,443,606,496,604,399,626,407,695],
  '#ffd540': [709,464,619,499,739,547,627,568,674,572,604,629,651,632,714,606,761,610,626,692,691,668,666,728,702,880],
  '#ffe544': [737,672,784,672,830,672,712,734,761,733,807,733,853,733,900,733,686,793,737,793,784,793,830,793,877,793,761,861,807,855,853,855,733,933,788,918,840,923,753,996,760,1079],
  '#c8fb3f': [723,123,886,307,773,344,949,398,869,432,800,476,968,538,830,549,877,549,807,610,853,610,900,610,961,616,877,672,924,672],
  '#a5fc40': [946,733,993,733,1040,742,924,795,970,795,1020,806,900,855,989,858,1033,884,887,923,930,949,996,928,1040,953,847,992,893,992,983,1028,930,1043,1050,1040,824,1131,1018,1128,906,1193,986,1179],
  '#74fb3d': [1067,207,1173,218,1089,277,1168,449,1050,499,1217,533,1090,569,1142,583,1250,625,1089,697,1206,692],
  '#6efb70': [1387,393,1330,602,1459,682,1113,757,1135,819,1089,876,1235,861,1138,888,1331,855,1275,904,1106,941,1209,919,1293,969,1195,987,1092,1008,1165,1041,1229,1036,1207,1098,1094,1135,1163,1122,1170,1192],
  '#70fce0': [1371,891,1391,985,1479,958,1287,1065,1276,1133,1324,1131,1391,1118,1357,1190,1556,1115,1544,1192,1330,1282,1287,1305],
  '#49a8fc': [1328,1412,1382,1432,1514,1436,1432,1518,1381,1560]
};
// everything else: rim, small components
var rim = {
  '#fff240': [1291,730,1418,631,1525,580,1620,552],
  '#a6ff45': [1705,540,1779,536,1847,536,1907,553,1966,560],
  '#70ff40': [2024,573,2117,603,2067,626,2168,640,2243,679,2180,702],
  '#70fc78': [2248,746,2308,751,2366,800,2315,829,2381,872,2267,898,2223,931,2389,926,2219,976,2205,1065],
  '#72fcd0': [2448,948,2380,995,2424,1027,2467,1055,2394,1111,2484,1110,2463,1164,2394,1184,2498,1235],
  '#58c0fc': [2429,1234,2416,1285,2374,1316,2475,1320,2222,1315,2250,1344,2291,1370,2300,1405,2473,1384],
  '#45a5ff': [2444,1437,2391,1386,2363,1455],
  '#2d75ff': [2420,1499,2323,1503,2389,1549,2358,1604],
  '#2060ff': [2289,1543,2283,1619,2271,1646,2243,1734,2319,1679],
  '#1040ff': [2045,1525,2096,1532,2132,1522,2069,1543,2120,1550,2042,1554,2093,1561,2065,1572,2038,1584,2116,1579,2145,1582,2089,1590,2061,1602,2112,1608,2156,1610,2134,1630,2171,1636],
  '#0a00ff': [2177,1751,2048,1762,2141,1796,1971,1773,1955,1705,2083,1826,2018,1833,1961,1850],
  '#3000ff': [1867,1373,1878,1473,1862,1516,1892,1517],
  '#6a0dff': [1904,1841,1850,1864,1795,1843,1740,1863,1689,1837,1756,1773,1717,1732,1781,1666,1698,1566,1771,1576,1796,1593,1769,1606,1871,1691,1823,1719,1860,1727,1883,1750,1855,1761],
  '#bd2ef5': [1600,1829,1648,1795,1547,1794,1542,1734,1649,1718,1626,1698,1612,1672,1643,1666,1588,1548,1582,1582,1552,1595,1617,1585],
  '#e830e0': [1428,1587,1314,1621,1479,1617,1380,1645,1507,1679,1446,1699,1385,1707,1476,1764],
  '#e8309c': [1317,1418,1292,1469,1232,1492,1399,1474,1337,1511,1437,1523,1501,1522,1274,1556,1361,1569],
  '#ee3355': [1155,1217,1173,1287,1199,1340,1242,1378,1213,1428,1478,1242,1538,1242,1574,1285,1604,1285,1459,1342],
  '#ee5a28': [1203,856,1153,992,1142,1115]
};
// links of the outer part of the central component, and the bright rows of the middle
var linksCore = [471,788,877,793,516,790,830,793,563,793,784,793,666,728,900,733,712,734,900,733,691,668,924,672,714,606,900,610,377,220,453,464,304,390,440,600,453,464,499,457,453,464,444,606,499,457,550,620,499,457,466,545,723,123,709,464,709,464,619,499,709,464,720,600,619,499,555,620,773,344,730,545,773,344,800,476,800,476,830,549,886,307,869,432,869,432,949,398,869,432,830,549,869,432,860,610,949,398,900,610,1067,207,968,538,1067,207,990,730,1173,218,1089,277,1173,218,1050,499,1089,277,900,610,1089,277,877,672,1387,393,1217,533,1217,533,1090,569,1217,533,1000,730,1217,533,1250,625,1168,449,1090,569,1050,499,968,538,1050,499,1000,730,968,538,1090,569,1142,583,1330,602,1142,583,1040,742,1090,569,993,733,1090,569,1135,819,961,616,1250,625,1250,625,1287,1065,1330,602,1235,861,1459,682,1138,888,1206,692,1113,757,1089,697,1040,880,1113,757,1135,819,1135,819,1165,1041,1235,861,1275,904,1331,855,1275,904,1275,904,1371,891,1479,958,1391,985,1391,985,1275,904,1479,958,1293,969,1391,985,1293,969,1391,985,1195,987,1287,1065,1391,985,1287,1065,1391,1118,1391,1118,1556,1115,1391,1118,1544,1192,1391,1118,1324,1131,1324,1131,1163,1050,1276,1133,1094,1135,1276,1133,1357,1190,1287,1065,1165,1041,1287,1065,1330,1282,1330,1282,1287,1305,1330,1282,1328,1412,1287,1305,1514,1436,1287,1305,1328,1412,1287,1305,1140,1110,1330,1282,1165,1122,184,855,279,777,184,855,306,835,168,1021,243,973,168,1021,216,915,168,1021,279,777,243,973,279,777,243,973,317,737,243,973,437,1290,437,1290,760,1079,437,1290,406,1525,530,1289,565,1045,587,1389,610,1020,633,1389,612,1020,587,1389,633,1389,626,1085,760,1079,760,1079,983,1028,760,1079,930,1043,626,1085,569,1045,612,1019,626,1085,400,964,520,1034,459,987,569,1045,520,1034,612,1019,576,941,760,1000,702,880,760,1079,656,926,760,1079,824,1131,986,1179,824,1131,790,920,906,1193,930,1043,986,1179,1046,1600,986,1179,1018,1128,986,1179,900,920,1018,1128,1000,1040,1018,1128,880,990,1170,1192,1287,1305,1170,1192,1328,1412,1163,1122,1330,1282,1163,1122,1170,1192,1163,1122,1287,1305,1165,1041,1163,1122,1040,953,1170,1192,1040,953,1163,1122,1040,953,1287,1065,1040,953,1391,1118,1040,953,1276,1133,1040,953,1324,1131,1040,953,1207,1098,970,795,1391,1118,900,855,1287,1065,900,855,1391,1118,924,795,1163,1122,900,855,1165,1041];
var linksFull = [2205,1065,2074,1075,2219,976,2131,987,2267,898,2223,931,2223,931,2131,987,2166,1304,2222,1315,2166,1304,2250,1344,2250,1344,2291,1370,2291,1370,2300,1405,2047,1294,2081,1303,2047,1294,2113,1339,2047,1294,2081,1357,2020,1249,2047,1294,1867,1373,1878,1473,1878,1473,1862,1516,1878,1473,1892,1517,1862,1516,1892,1517,1582,1582,1588,1548,1582,1582,1552,1595,1582,1582,1617,1585,1771,1576,1796,1593,1771,1576,1769,1606,1769,1606,1796,1593,1612,1672,1643,1666,1612,1672,1626,1698,1643,1666,1626,1698,1626,1698,1649,1718,1860,1727,1871,1691,1860,1727,1823,1719,1860,1727,1883,1750,1860,1727,1855,1761,1855,1761,1883,1750,2283,1619,2271,1646];

function line(a, b, c, d) {
  var l = document.createElementNS(NS, 'line');
  l.setAttribute('class', 'edge');
  l.setAttribute('x1', a); l.setAttribute('y1', b);
  l.setAttribute('x2', c); l.setAttribute('y2', d);
  svg.appendChild(l);
}
function dot(x, y, fill) {
  var c = document.createElementNS(NS, 'circle');
  c.setAttribute('class', 'node');
  c.setAttribute('cx', x); c.setAttribute('cy', y);
  c.setAttribute('r', 7.3); c.setAttribute('fill', fill);
  svg.appendChild(c);
}

var seed = 7;
function rnd() { seed = (seed * 16807) % 2147483647; return seed / 2147483647; }

// dense middle of the central component
var pts = [], k, i, j;
for (k in core) for (i = 0; i < core[k].length; i += 2) {
  var zx = core[k][i], zy = core[k][i + 1];
  if (zy > 540 && zy < 1060 && zx > 170 && zx < 1300) pts.push(Z(zx, zy));
}
for (i = 0; i < pts.length; i++) for (j = i + 1; j < pts.length; j++) {
  var dx = pts[i][0] - pts[j][0], dy = pts[i][1] - pts[j][1], d = Math.sqrt(dx * dx + dy * dy);
  var mx = (pts[i][0] + pts[j][0]) / 2, c = Math.max(0, 1 - Math.abs(mx - 1700) / 420);
  if ((d < 150 && rnd() < .12 + .14 * c) || (d < 300 && rnd() < .025 * c)) line(pts[i][0], pts[i][1], pts[j][0], pts[j][1]);
}
// dense blue component
var blue = rim['#1040ff'];
for (i = 0; i < blue.length; i += 2) for (j = i + 2; j < blue.length; j += 2) {
  var bd = Math.hypot(blue[i] - blue[j], blue[i + 1] - blue[j + 1]);
  if (bd < 90 && rnd() < .75) line(blue[i], blue[i + 1], blue[j], blue[j + 1]);
}
for (i = 0; i < linksCore.length; i += 4) {
  var p = Z(linksCore[i], linksCore[i + 1]), q = Z(linksCore[i + 2], linksCore[i + 3]);
  line(p[0], p[1], q[0], q[1]);
}
for (i = 0; i < linksFull.length; i += 4) line(linksFull[i], linksFull[i + 1], linksFull[i + 2], linksFull[i + 3]);

for (k in core) for (i = 0; i < core[k].length; i += 2) { var n = Z(core[k][i], core[k][i + 1]); dot(n[0], n[1], k); }
for (k in rim) for (i = 0; i < rim[k].length; i += 2) dot(rim[k][i], rim[k][i + 1], k);
```
